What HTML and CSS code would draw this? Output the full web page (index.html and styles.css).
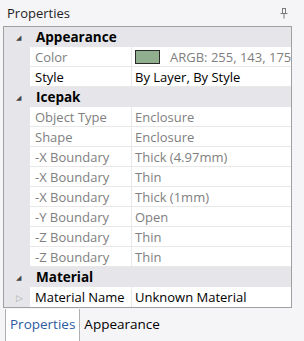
FILE: index.html
```html
<!DOCTYPE html>
<html>
<head>
<meta charset="utf-8">
<link rel="stylesheet" href="styles.css">
</head>
<body>
<div class="panel">
  <div class="title">
    <span>Properties</span>
    <svg class="pin" width="8" height="11" viewBox="0 0 8 11"><path d="M2 0.5h4M2.5 0.5v5M5.5 0.5v5M0.5 5.5h7M4 5.5v5" stroke="#7a7a7a" stroke-width="1" fill="none"/></svg>
  </div>
  <div class="grid">
    <div class="cat"><span class="tri">◢</span><span class="catname">Appearance</span></div>
    <div class="row"><span class="gut"></span><span class="name dim">Color</span><span class="val dim"><span class="swatch"></span>ARGB: 255, 143, 175</span></div>
    <div class="row"><span class="gut"></span><span class="name">Style</span><span class="val">By Layer, By Style</span></div>
    <div class="cat"><span class="tri">◢</span><span class="catname">Icepak</span></div>
    <div class="row"><span class="gut"></span><span class="name dim">Object Type</span><span class="val dim">Enclosure</span></div>
    <div class="row"><span class="gut"></span><span class="name dim">Shape</span><span class="val dim">Enclosure</span></div>
    <div class="row"><span class="gut"></span><span class="name dim">-X Boundary</span><span class="val dim">Thick (4.97mm)</span></div>
    <div class="row"><span class="gut"></span><span class="name dim">-X Boundary</span><span class="val dim">Thin</span></div>
    <div class="row"><span class="gut"></span><span class="name dim">-X Boundary</span><span class="val dim">Thick (1mm)</span></div>
    <div class="row"><span class="gut"></span><span class="name dim">-Y Boundary</span><span class="val dim">Open</span></div>
    <div class="row"><span class="gut"></span><span class="name dim">-Z Boundary</span><span class="val dim">Thin</span></div>
    <div class="row"><span class="gut"></span><span class="name dim">-Z Boundary</span><span class="val dim">Thin</span></div>
    <div class="cat"><span class="tri">◢</span><span class="catname">Material</span></div>
    <div class="row last"><span class="gut"><span class="exp">▷</span></span><span class="name">Material Name</span><span class="val">Unknown Material</span></div>
  </div>
  <div class="tabs">
    <span class="tab active">Properties</span>
    <span class="tab">Appearance</span>
  </div>
</div>
</body>
</html>
```
FILE: styles.css
```css
html, body {
  margin: 0;
  padding: 0;
  background: #f5f5f7;
}
body {
  font-family: "Open Sans", "Noto Sans", sans-serif;
  font-size: 13px;
  color: #000;
}
.panel {
  width: 304px;
  height: 341px;
}
.title {
  height: 26px;
  display: flex;
  align-items: center;
  justify-content: space-between;
  padding: 0 16px 0 7px;
  box-sizing: border-box;
  color: #1e1e1e;
  font-size: 13px;
}
.pin {
  display: block;
}
.grid {
  margin-left: 3px;
  width: 289px;
  border: 1px solid #a0a0a0;
  background: #e6e6ea;
  box-sizing: border-box;
}
.cat {
  height: 20px;
  display: flex;
  align-items: center;
  background: #e6e6ea;
}
.tri {
  width: 26px;
  font-size: 7px;
  color: #444;
  padding-left: 12px;
  box-sizing: border-box;
}
.catname {
  font-weight: bold;
  font-size: 13.5px;
  padding-left: 6px;
}
.row {
  height: 20px;
  display: grid;
  grid-template-columns: 26px 102px 1fr;
}
.gut {
  background: #e6e6ea;
  display: flex;
  align-items: center;
}
.exp {
  font-size: 9px;
  color: #a8a8a8;
  padding-left: 12px;
}
.name, .val {
  background: #fff;
  border-bottom: 1px solid #e8e8e8;
  display: flex;
  align-items: center;
  white-space: nowrap;
  overflow: hidden;
}
.name {
  padding-left: 5px;
  border-right: 1px solid #e8e8e8;
}
.val {
  padding-left: 3px;
}
.last .name, .last .val {
  border-bottom: none;
}
.dim {
  color: #808080;
}
.swatch {
  width: 23px;
  height: 12px;
  background: #8faf8f;
  border: 1px solid #2a2a2a;
  margin-right: 10px;
  flex: none;
}
.tabs {
  display: flex;
  margin-top: 1px;
  padding-left: 5px;
  height: 32px;
}
.tab {
  display: flex;
  align-items: center;
  padding: 0 4px 2px 4px;
  height: 32px;
  box-sizing: border-box;
  font-size: 13.5px;
}
.tab.active {
  background: #fff;
  color: #2c5aa0;
  border-left: 1px solid #b0b0b0;
  border-right: 1px solid #b0b0b0;
}
```
